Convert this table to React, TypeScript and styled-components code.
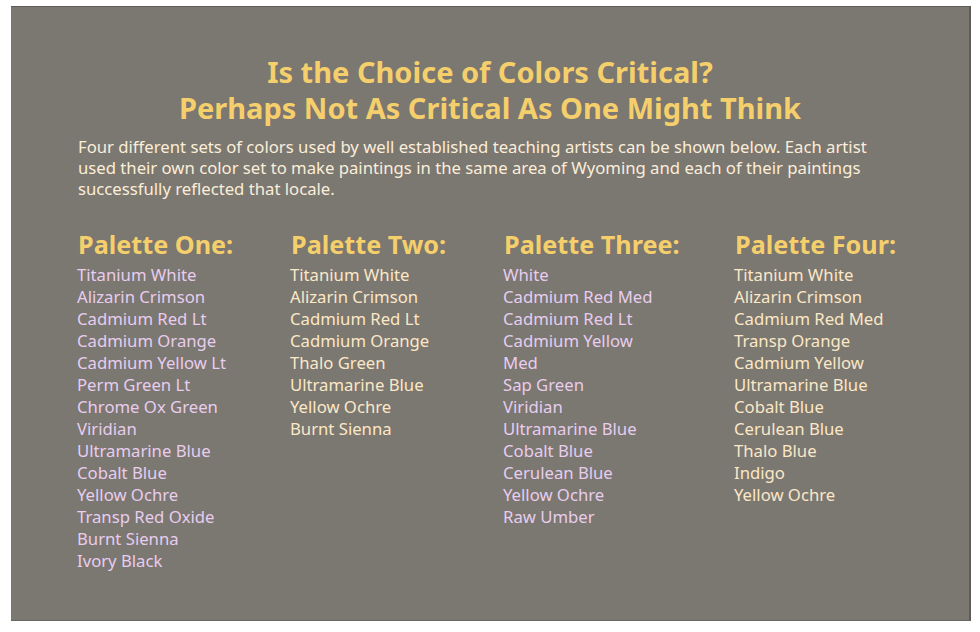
import React from "react";
import styled, { createGlobalStyle } from "styled-components";

const GlobalStyle = createGlobalStyle`
  body {
    margin: 0;
    background: #ffffff;
    font-family: "Noto Sans", "Open Sans", sans-serif;
  }
`;

const Page = styled.div`
  padding: 6px 9px 0 11px;
`;

const Panel = styled.section`
  box-sizing: border-box;
  width: 960px;
  height: 615px;
  background: #7b7771;
  border-top: 1px solid #5f5c58;
  border-right: 2px solid #5f5c58;
  border-bottom: 1px solid #6a6762;
  padding: 47px 0 0 66px;
`;

const Title = styled.h1`
  margin: 0 0 0 -66px;
  text-align: center;
  font-size: 29px;
  line-height: 36px;
  font-weight: 700;
  color: #f5cf6b;
`;

const Intro = styled.p`
  margin: 10px 0 0 1px;
  width: 800px;
  font-size: 16.7px;
  line-height: 21px;
  color: #fbeed8;
`;

const Columns = styled.div`
  display: grid;
  grid-template-columns: 213px 213px 231px 1fr;
  margin-top: 28px;
`;

const Column = styled.div``;

const Heading = styled.h2`
  margin: 0 0 0 1px;
  font-size: 25.2px;
  line-height: 34px;
  font-weight: 700;
  color: #f5cf6b;
  white-space: nowrap;
`;

const List = styled.ul<{ $tone: "lilac" | "cream" }>`
  list-style: none;
  margin: 3px 0 0;
  padding: 0;
  width: 160px;
  font-size: 16.7px;
  line-height: 22px;
  color: ${(p) => (p.$tone === "lilac" ? "#e8cdee" : "#fbe8c6")};
`;

const palettes: { name: string; tone: "lilac" | "cream"; colors: string[] }[] = [
  {
    name: "Palette One:",
    tone: "lilac",
    colors: [
      "Titanium White",
      "Alizarin Crimson",
      "Cadmium Red Lt",
      "Cadmium Orange",
      "Cadmium Yellow Lt",
      "Perm Green Lt",
      "Chrome Ox Green",
      "Viridian",
      "Ultramarine Blue",
      "Cobalt Blue",
      "Yellow Ochre",
      "Transp Red Oxide",
      "Burnt Sienna",
      "Ivory Black",
    ],
  },
  {
    name: "Palette Two:",
    tone: "cream",
    colors: [
      "Titanium White",
      "Alizarin Crimson",
      "Cadmium Red Lt",
      "Cadmium Orange",
      "Thalo Green",
      "Ultramarine Blue",
      "Yellow Ochre",
      "Burnt Sienna",
    ],
  },
  {
    name: "Palette Three:",
    tone: "lilac",
    colors: [
      "White",
      "Cadmium Red Med",
      "Cadmium Red Lt",
      "Cadmium Yellow Med",
      "Sap Green",
      "Viridian",
      "Ultramarine Blue",
      "Cobalt Blue",
      "Cerulean Blue",
      "Yellow Ochre",
      "Raw Umber",
    ],
  },
  {
    name: "Palette Four:",
    tone: "cream",
    colors: [
      "Titanium White",
      "Alizarin Crimson",
      "Cadmium Red Med",
      "Transp Orange",
      "Cadmium Yellow",
      "Ultramarine Blue",
      "Cobalt Blue",
      "Cerulean Blue",
      "Thalo Blue",
      "Indigo",
      "Yellow Ochre",
    ],
  },
];

export default function App() {
  return (
    <Page>
      <GlobalStyle />
      <Panel>
        <Title>
          Is the Choice of Colors Critical?
          <br />
          Perhaps Not As Critical As One Might Think
        </Title>
        <Intro>
          Four different sets of colors used by well established teaching
          artists can be shown below. Each artist used their own color set to
          make paintings in the same area of Wyoming and each of their
          paintings successfully reflected that locale.
        </Intro>
        <Columns>
          {palettes.map((p) => (
            <Column key={p.name}>
              <Heading>{p.name}</Heading>
              <List $tone={p.tone}>
                {p.colors.map((c) => (
                  <li key={c}>{c}</li>
                ))}
              </List>
            </Column>
          ))}
        </Columns>
      </Panel>
    </Page>
  );
}
